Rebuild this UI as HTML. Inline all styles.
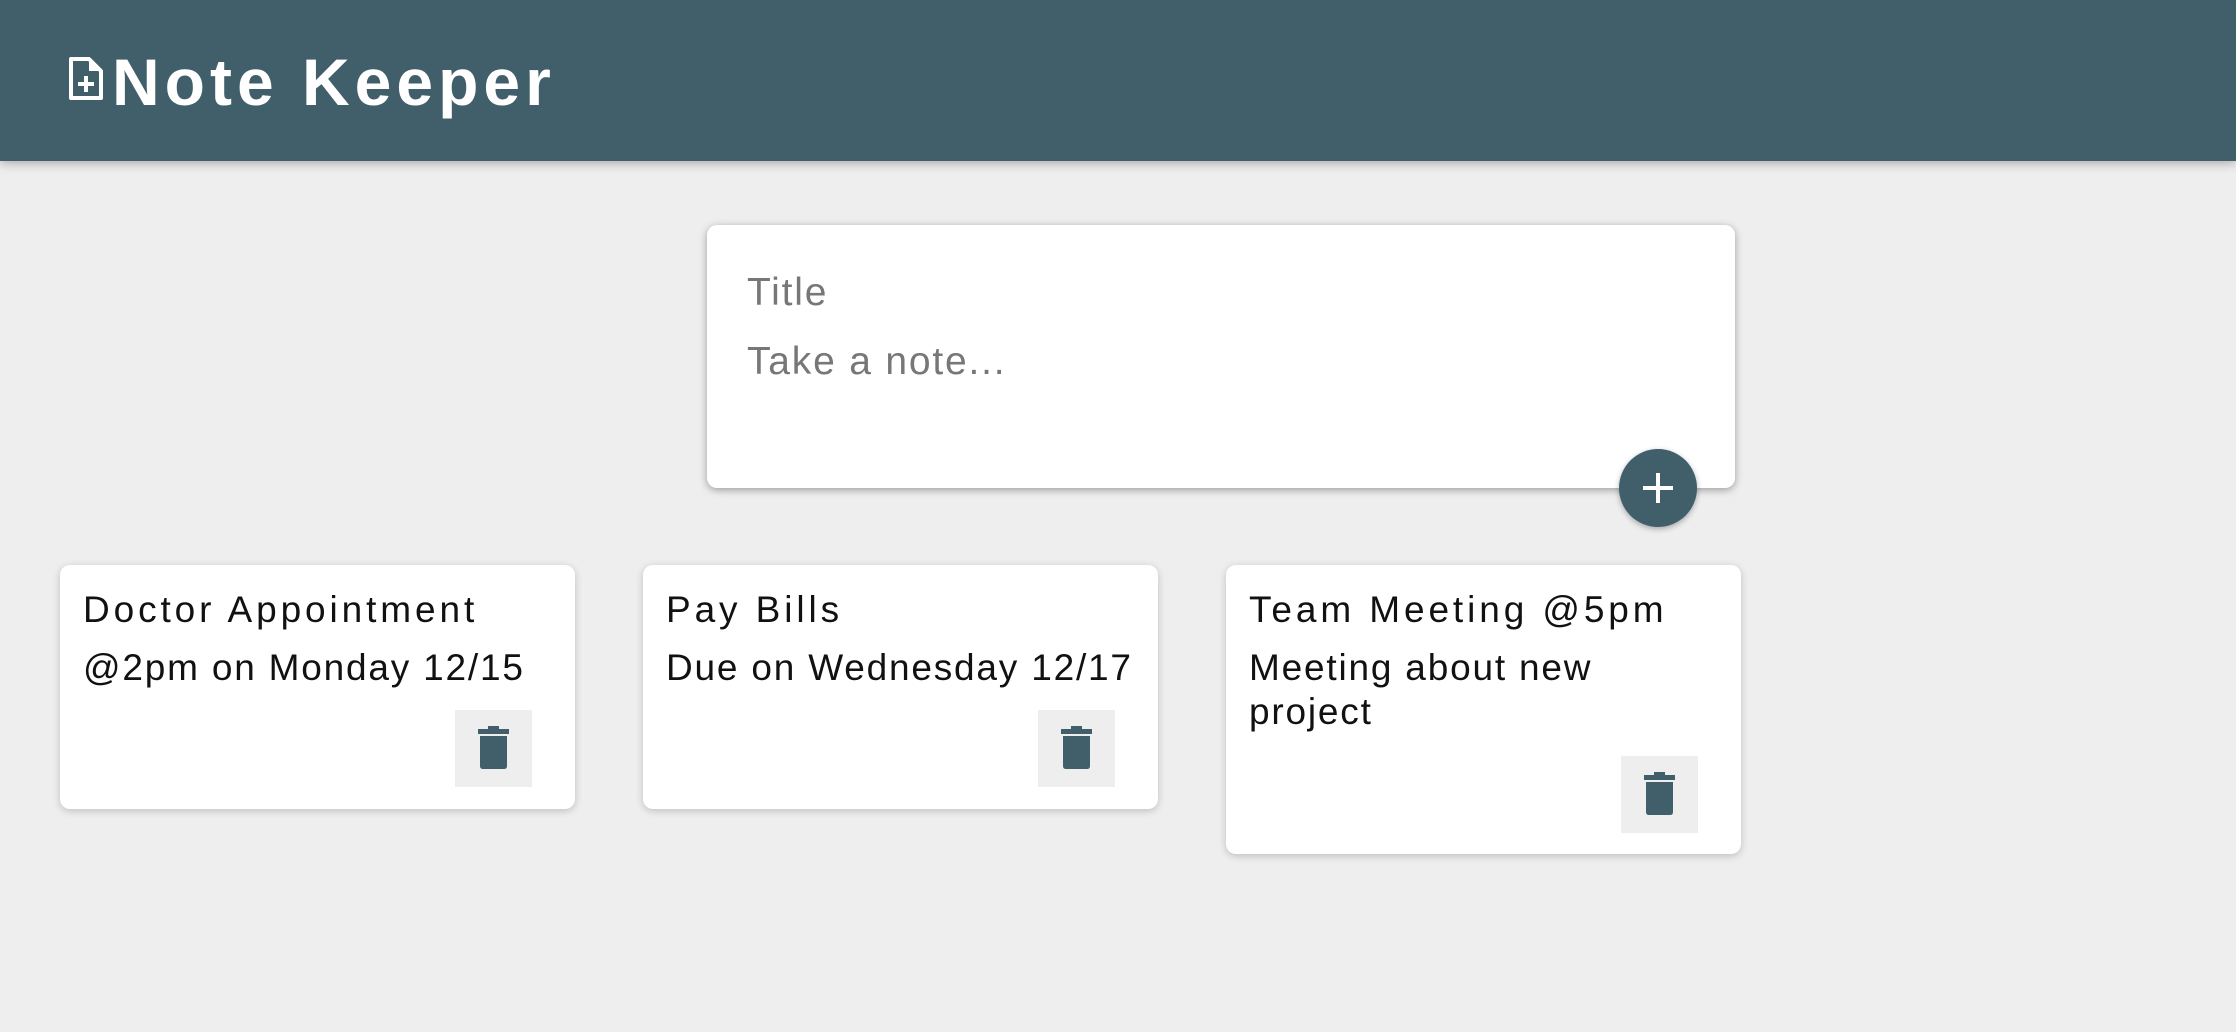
<!DOCTYPE html>
<html><head><style>
*{margin:0;padding:0;box-sizing:border-box}
body{width:2236px;height:1032px;background:#eeeeee;font-family:"Liberation Sans",sans-serif;position:relative;overflow:hidden}
header{position:absolute;left:0;top:0;width:2236px;height:161px;background:#415f6b;box-shadow:0 2px 10px rgba(0,0,0,.3)}
.logo{position:absolute;left:112px;top:44px;color:#fff;font-size:66px;letter-spacing:5px;font-weight:bold}
.create{position:absolute;left:707px;top:225px;width:1028px;height:263px;background:#fff;border-radius:10px;box-shadow:0 2px 8px rgba(0,0,0,.35)}
.ph{position:absolute;left:40px;color:#777;font-size:39px;letter-spacing:1.8px}
.fab{position:absolute;left:1619px;top:449px;width:78px;height:78px;border-radius:50%;background:#415f6b;box-shadow:0 2px 6px rgba(0,0,0,.3)}
.note{position:absolute;top:565px;width:515px;background:#fff;border-radius:10px;box-shadow:0 2px 8px rgba(0,0,0,.2)}
.note h1{position:absolute;left:23px;top:24px;font-weight:normal;font-size:37px;letter-spacing:3.9px;color:#111;white-space:nowrap}
.note p{position:absolute;left:23px;top:81px;font-size:37px;letter-spacing:1.8px;line-height:44px;color:#111;width:480px;white-space:nowrap}
.del{position:absolute;right:43px;width:77px;height:77px;background:#eee}
.del svg{position:absolute;left:22px;top:16px}
</style></head><body>
<header>
<svg style="position:absolute;left:68px;top:57px" width="36" height="44" viewBox="0 0 36 44"><path d="M3 2h18l12 12v27H3z" fill="none" stroke="#fff" stroke-width="4" stroke-linejoin="round"/><path d="M21 2v12h12" fill="#fff"/><path d="M18 19v16M10 27h16" stroke="#fff" stroke-width="4"/></svg>
<div class="logo">Note Keeper</div>
</header>
<div class="create">
<div class="ph" style="top:46px">Title</div>
<div class="ph" style="top:115px">Take a note...</div>
</div>
<div class="fab"><svg width="78" height="78" viewBox="0 0 78 78"><path d="M39 24v30M24 39h30" stroke="#fff" stroke-width="4"/></svg></div>

<div class="note" style="left:60px;height:244px"><h1>Doctor Appointment</h1><p>@2pm on Monday 12/15</p>
<div class="del" style="top:145px"><svg width="33" height="44" viewBox="0 0 33 44"><rect x="1" y="3" width="31" height="5" fill="#415f6b"/><rect x="11" y="0" width="11" height="4" fill="#415f6b"/><path d="M3 10h27v30q0 3-3 3H6q-3 0-3-3z" fill="#415f6b"/></svg></div></div>

<div class="note" style="left:643px;height:244px"><h1>Pay Bills</h1><p>Due on Wednesday 12/17</p>
<div class="del" style="top:145px"><svg width="33" height="44" viewBox="0 0 33 44"><rect x="1" y="3" width="31" height="5" fill="#415f6b"/><rect x="11" y="0" width="11" height="4" fill="#415f6b"/><path d="M3 10h27v30q0 3-3 3H6q-3 0-3-3z" fill="#415f6b"/></svg></div></div>

<div class="note" style="left:1226px;height:289px"><h1>Team Meeting @5pm</h1><p>Meeting about new<br>project</p>
<div class="del" style="top:191px"><svg width="33" height="44" viewBox="0 0 33 44"><rect x="1" y="3" width="31" height="5" fill="#415f6b"/><rect x="11" y="0" width="11" height="4" fill="#415f6b"/><path d="M3 10h27v30q0 3-3 3H6q-3 0-3-3z" fill="#415f6b"/></svg></div></div>
</body></html>
